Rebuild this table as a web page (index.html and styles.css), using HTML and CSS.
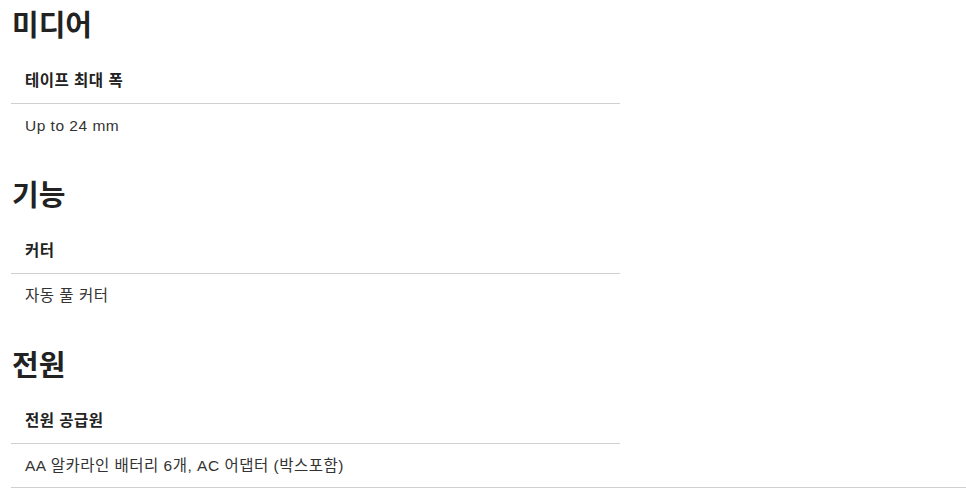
FILE: index.html
```html
<!DOCTYPE html>
<html lang="ko">
<head>
    <meta charset="UTF-8">
    <meta name="viewport" content="width=device-width, initial-scale=1.0">
    <title>제품 사양</title>
    <link rel="stylesheet" href="styles.css">
</head>
<body>
    <div class="spec-container">
        <div class="spec-section">
            <h2>미디어</h2>
            <div class="spec-table">
                <div class="spec-label">테이프 최대 폭</div>
                <div class="spec-value">Up to 24 mm</div>
            </div>
        </div>
        <div class="spec-section">
            <h2>기능</h2>
            <div class="spec-table">
                <div class="spec-label">커터</div>
                <div class="spec-value">자동 풀 커터</div>
            </div>
        </div>
        <div class="spec-section">
            <h2>전원</h2>
            <div class="spec-table">
                <div class="spec-label">전원 공급원</div>
                <div class="spec-value">AA 알카라인 배터리 6개, AC 어댑터 (박스포함)</div>
            </div>
        </div>
    </div>
</body>
</html>
```

FILE: styles.css
```css
body {
    font-family: 'Liberation Sans', 'Noto Sans CJK KR', sans-serif;
    margin: 0;
    background-color: #fff;
    color: #333;
}
.spec-container {
    margin-left: 11px;
    padding-top: 5px;
    border-bottom: 1px solid #d0d0d0;
}
.spec-section {
    margin-bottom: 28px;
}
.spec-section:last-child {
    margin-bottom: 0;
}
h2 {
    font-family: 'Noto Sans CJK KR', sans-serif;
    font-size: 29px;
    line-height: 36px;
    font-weight: 700;
    color: #222;
    margin: 0 0 18px 1px;
}
.spec-table {
    width: 609px;
}
.spec-label,
.spec-value {
    padding: 0 14px;
    font-size: 15.5px;
    letter-spacing: 0.5px;
}
.spec-label {
    height: 44px;
    line-height: 44px;
    font-weight: 700;
    color: #222;
    border-bottom: 1px solid #d0d0d0;
}
.spec-value {
    height: 43px;
    line-height: 43px;
}
```
